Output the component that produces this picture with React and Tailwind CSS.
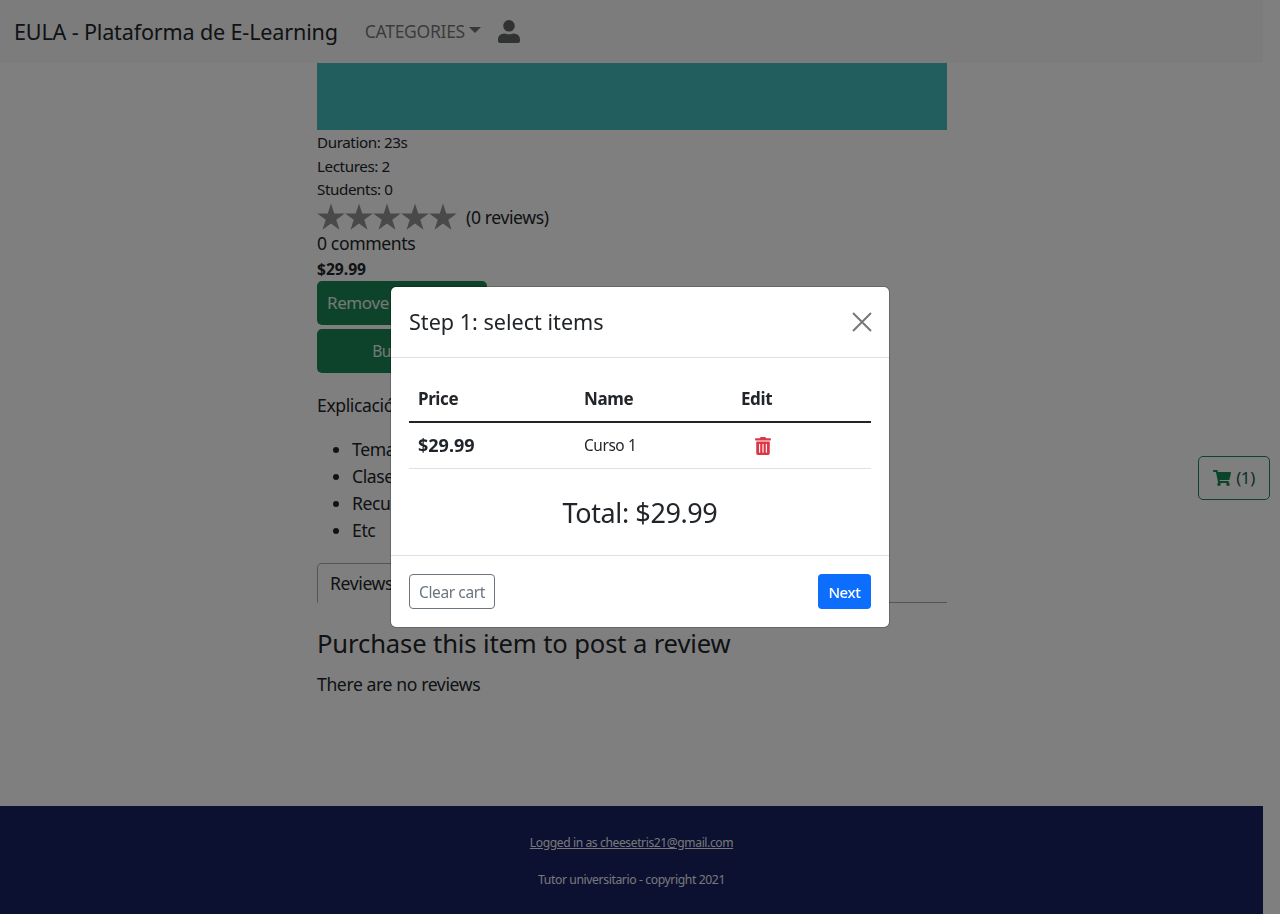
import React from 'react';
import { FaShoppingCart, FaTrashAlt } from 'react-icons/fa';

const FONT = "font-['Noto_Sans','Open_Sans',sans-serif]";

const Star = () => (
    <svg viewBox="0 0 28 28" className="w-[28px] h-[28px] shrink-0" fill="#929292">
        <polygon points="14,0.5 17.26,10.52 27.79,10.52 19.27,16.71 22.52,26.73 14,20.54 5.48,26.73 8.73,16.71 0.21,10.52 10.74,10.52" />
    </svg>
);

const UserIcon = () => (
    <svg viewBox="0 0 22 23" className="ml-[17px] w-[22px] h-[23px] shrink-0" fill="currentColor">
        <circle cx="11" cy="5.8" r="5.8" />
        <path d="M6.5 13.6 C8.5 14.6 13.5 14.6 15.5 13.6 C19.5 13.8 22 16 22 19.5 V21 C22 22.2 21.2 23 20 23 H2 C0.8 23 0 22.2 0 21 V19.5 C0 16 2.5 13.8 6.5 13.6 Z" />
    </svg>
);

export default function App() {
    return (
        <div className={`${FONT} relative w-[1280px] h-[914px] overflow-hidden bg-white text-[#212529] tracking-[-0.025em]`}>
            <div className="flex flex-col w-[1263px] h-[914px]">
                {/* Navbar */}
                <nav className="h-[63px] shrink-0 bg-[#f8f9fa] flex items-center pl-[14px]">
                    <a className="text-[21.6px] leading-[32px] mr-[27px] tracking-[-0.008em]">EULA - Plataforma de E-Learning</a>
                    <a className="text-[17.6px] uppercase text-black/55 flex items-center tracking-[-0.02em]">
                        Categories
                        <span className="ml-[4px] mt-[-2px] border-t-[6px] border-x-[6px] border-t-black/55 border-x-transparent"></span>
                    </a>
                    <span className="text-black/60"><UserIcon /></span>
                </nav>

                {/* Course */}
                <main className="flex-1 w-[630px] ml-[317px]">
                    <div className="h-[67px] bg-[#45bcbc]"></div>
                    <div className="text-[15.2px] leading-[23.5px] pt-[1px]">
                        <div>Duration: 23s</div>
                        <div>Lectures: 2</div>
                        <div>Students: 0</div>
                    </div>
                    <div className="flex items-center h-[31px]">
                        <div className="flex">
                            <Star /><Star /><Star /><Star /><Star />
                        </div>
                        <span className="ml-[9px] text-[17.6px]">(0 reviews)</span>
                    </div>
                    <div className="text-[17.6px] leading-[24px] mt-[-2px]">0 comments</div>
                    <div className="text-[15.6px] leading-[24px] mt-[2px] font-bold tracking-normal">$29.99</div>
                    <div className="flex flex-col gap-[4px] w-[170px]">
                        <button className="h-[44px] bg-[#198754] text-white/90 rounded-[5px] text-[17px] whitespace-nowrap text-left pl-[10px] pt-[1px]">Remove from cart</button>
                        <button className="h-[44px] bg-[#198754] text-white/90 rounded-[5px] text-[15.5px] text-center pt-[2px]">Buy now</button>
                    </div>
                    <p className="text-[17.6px] leading-[27px] mt-[19px]">Explicación del curso</p>
                    <ul className="list-disc pl-[35px] text-[17.6px] leading-[27px] mt-[17px]">
                        <li>Temas</li>
                        <li>Clases</li>
                        <li>Recursos</li>
                        <li>Etc</li>
                    </ul>
                    <div className="flex items-end h-[41px] mt-[18px] border-b border-[#a9a9a9]">
                        <div className="h-[40px] mb-[-1px] px-[12px] border border-[#a9a9a9] border-b-white rounded-t-[5px] text-[17.6px] leading-[38px] bg-white">Reviews</div>
                    </div>
                    <h3 className="text-[25.6px] leading-[36px] mt-[23px] tracking-[-0.005em]">Purchase this item to post a review</h3>
                    <p className="text-[17.6px] leading-[27px] mt-[9px]">There are no reviews</p>
                </main>

                {/* Footer */}
                <footer className="h-[108px] shrink-0 bg-[#192262] flex flex-col items-center text-[12.1px] text-white/95">
                    <a className="underline mt-[28px] leading-[18px]">Logged in as cheesetris21@gmail.com</a>
                    <p className="mt-[19px] leading-[18px] text-[12.2px]">Tutor universitario - copyright 2021</p>
                </footer>
            </div>

            {/* Floating cart */}
            <button className="absolute left-[1198px] top-[456px] w-[72px] h-[44px] border border-[#198754] rounded-[5px] flex items-center justify-center gap-[5px] text-[#198754] text-[17px]">
                <FaShoppingCart className="w-[18px] h-[16px]" />
                <span className="text-[#1d5f48]">(1)</span>
            </button>

            {/* Modal */}
            <div className="fixed inset-0 bg-black/50 flex items-center justify-center">
                <div className="w-[500px] h-[342px] bg-white bg-clip-padding border border-black/20 rounded-[6px] flex flex-col">
                    <div className="h-[71px] shrink-0 px-[18px] border-b border-[#dee2e6] flex items-center justify-between">
                        <h5 className="text-[21.6px] leading-[32px] tracking-normal">Step 1: select items</h5>
                        <svg viewBox="0 0 20 20" className="w-[20px] h-[20px] mr-[-1px]" stroke="#777777" strokeWidth="2" fill="none">
                            <path d="M1 1 L19 19 M19 1 L1 19" />
                        </svg>
                    </div>
                    <div className="flex-1 px-[18px]">
                        <table className="w-[462px] table-fixed mt-[22px] border-collapse">
                            <thead>
                                <tr className="border-b-2 border-[#212529] text-[17px] font-bold text-left">
                                    <th className="w-[166px] h-[42px] pl-[9px] pb-[4px]">Price</th>
                                    <th className="w-[157px] pl-[9px] pb-[4px]">Name</th>
                                    <th className="pl-[9px] pb-[4px]">Edit</th>
                                </tr>
                            </thead>
                            <tbody>
                                <tr className="border-b border-[#dee2e6] h-[46px]">
                                    <td className="pl-[9px] text-[18px] font-bold tracking-normal">$29.99</td>
                                    <td className="pl-[9px] text-[15.4px] pt-[1px]">Curso 1</td>
                                    <td className="pl-[23px]"><FaTrashAlt className="text-[#dc3545] w-[16px] h-[18px] mt-[1px]" /></td>
                                </tr>
                            </tbody>
                        </table>
                        <div className="text-center text-[27px] leading-[40px] mt-[24px]">Total: $29.99</div>
                    </div>
                    <div className="h-[72px] shrink-0 px-[18px] border-t border-[#dee2e6] flex items-center justify-between">
                        <button className="w-[86px] h-[35px] pt-[2px] border border-[#6c757d] rounded-[4px] text-[#6c757d] text-[15.5px]">Clear cart</button>
                        <button className="w-[53px] h-[35px] pt-[1px] bg-[#0d6efd] rounded-[4px] text-white text-[15px] font-medium">Next</button>
                    </div>
                </div>
            </div>
        </div>
    );
}
